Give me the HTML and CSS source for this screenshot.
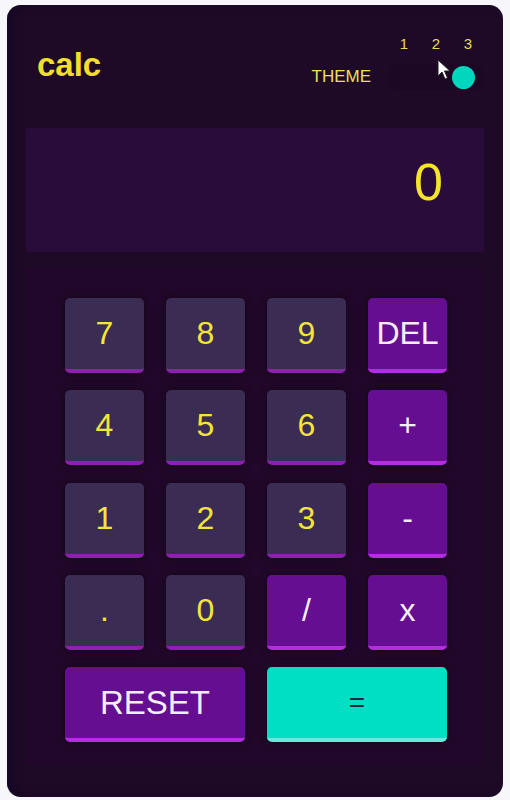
FILE: index.html
```html
<!DOCTYPE html>
<html lang="en">
<head>
<meta charset="utf-8">
<title>calc</title>
<link rel="stylesheet" href="styles.css">
</head>
<body>
<main class="card">
  <header class="header">
    <h1 class="title">calc</h1>
    <div class="theme">
      <span class="theme-label">THEME</span>
      <div class="switch">
        <div class="switch-nums"><span>1</span><span>2</span><span>3</span></div>
        <div class="track"><span class="knob"></span></div>
      </div>
    </div>
  </header>
  <section class="display">0</section>
  <section class="keypad">
    <button class="key num">7</button>
    <button class="key num">8</button>
    <button class="key num">9</button>
    <button class="key op">DEL</button>
    <button class="key num">4</button>
    <button class="key num">5</button>
    <button class="key num">6</button>
    <button class="key op">+</button>
    <button class="key num">1</button>
    <button class="key num">2</button>
    <button class="key num">3</button>
    <button class="key op">-</button>
    <button class="key num">.</button>
    <button class="key num">0</button>
    <button class="key op">/</button>
    <button class="key op">x</button>
    <button class="key op wide">RESET</button>
    <button class="key eq wide">=</button>
  </section>
  <svg class="cursor" width="14" height="22" viewBox="0 0 14 22">
    <path d="M1 1 L1 17 L5 13 L8 20 L10.5 19 L7.5 12 L13 12 Z" fill="#fff" stroke="#222" stroke-width="1"/>
  </svg>
</main>
</body>
</html>
```
FILE: styles.css
```css
* { box-sizing: border-box; }
html, body { margin: 0; padding: 0; }
body {
  background: #f7f6fb;
  padding: 5px 7px 0 7px;
  font-family: "Liberation Sans", Arial, sans-serif;
}
.card {
  position: relative;
  width: 496px;
  height: 792px;
  background: #1e0a26;
  border-radius: 14px;
  padding: 0 19px;
  box-shadow: inset 6px 0 10px rgba(10, 5, 40, 0.5);
}
.header {
  display: flex;
  justify-content: space-between;
  align-items: flex-end;
  padding: 30px 0 0 11px;
}
.title {
  margin: 0 0 9px 0;
  font-size: 33px;
  line-height: 33px;
  font-weight: bold;
  color: #f2de2c;
}
.theme {
  display: flex;
  align-items: flex-end;
  gap: 17px;
}
.theme-label {
  font-size: 17px;
  line-height: 17px;
  color: #ece05a;
  margin-bottom: 5px;
}
.switch {
  width: 96px;
  display: flex;
  flex-direction: column;
}
.switch-nums {
  display: flex;
  font-size: 15px;
  line-height: 18px;
  color: #e8dc5a;
}
.switch-nums span {
  width: 32px;
  text-align: center;
}
.track {
  margin-top: 11px;
  height: 26px;
  border-radius: 13px;
  background: #1c0824;
  display: flex;
  justify-content: flex-end;
  align-items: center;
  padding-right: 9px;
}
.knob {
  width: 23px;
  height: 23px;
  border-radius: 50%;
  background: #00d6bd;
}
.display {
  margin-top: 38px;
  height: 124px;
  background: #290c39;
  padding: 28px 41px 0 0;
  text-align: right;
  font-size: 52px;
  line-height: 52px;
  color: #f4e52c;
  border-radius: 2px;
}
.keypad {
  margin-top: 16px;
  background: #21082a;
  padding: 30px 37px 22px 39px;
  display: grid;
  grid-template-columns: repeat(4, 1fr);
  grid-auto-rows: 75px;
  column-gap: 22px;
  row-gap: 17.25px;
  border-radius: 2px;
}
.key {
  border: none;
  border-radius: 5px;
  font-family: "Liberation Sans", Arial, sans-serif;
  font-size: 32px;
  padding: 0;
  cursor: pointer;
  box-shadow: 0 0 8px rgba(0, 0, 0, 0.45);
}
.num {
  background: #3b2c54;
  color: #f3e53a;
  border-bottom: 4px solid #8e1fb0;
}
.op {
  background: #650e92;
  color: #f4eef8;
  border-bottom: 4px solid #b42ee0;
}
.eq {
  background: #00dec3;
  color: #1c2a40;
  border-bottom: 4px solid #6ae8dc;
  font-size: 28px;
}
.wide {
  grid-column: span 2;
}
.op.wide {
  font-size: 33px;
}
.cursor {
  position: absolute;
  left: 430px;
  top: 54px;
}
```
